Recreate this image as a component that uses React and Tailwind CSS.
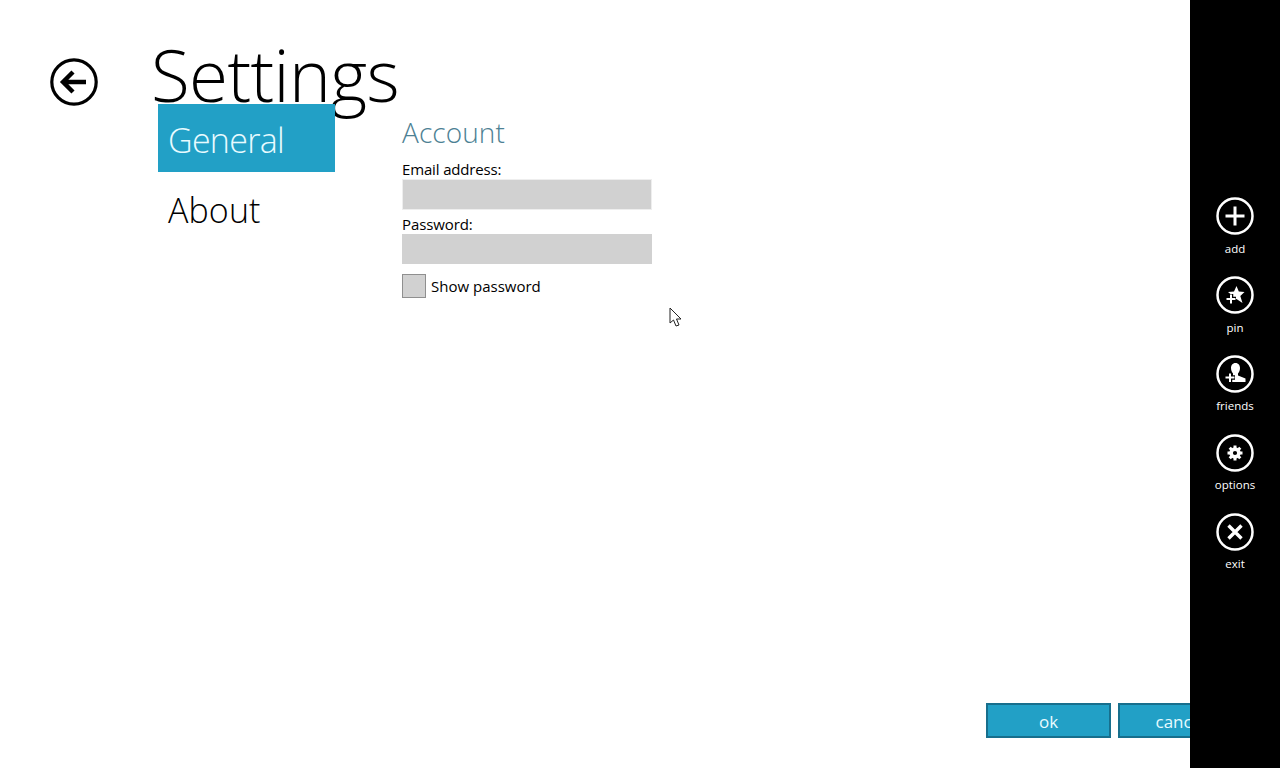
import React from "react";

const Circle = ({ children, sw = 2.5 }) => (
  <svg width="38" height="38" viewBox="0 0 38 38" fill="none" className="block">
    <circle cx="19" cy="19" r="17.5" stroke="white" strokeWidth={sw} />
    {children}
  </svg>
);

const actions = [
  {
    label: "add",
    gap: "mt-[4px]",
    icon: <path d="M19 9.5V28.5M9.5 19H28.5" stroke="white" strokeWidth="3" />,
  },
  {
    label: "pin",
    gap: "mt-[4px]",
    icon: (
      <>
        <path d="M20.5 10L22.8 15.6L28.5 16L24.3 20L26.5 27L20.5 23L15 25L17 20L12 16L18 15.6Z" fill="white" />
        <path d="M15 18V28M10 23H20" stroke="black" strokeWidth="4.5" />
        <path d="M15 18.5V27.5M10.5 23H19.5" stroke="white" strokeWidth="2" />
      </>
    ),
  },
  {
    label: "friends",
    gap: "mt-[3px]",
    icon: (
      <>
        <path d="M19.5 8C22.5 8 24 10.5 24 13C24 15.5 23 17.5 22 18.5V20.5L29.5 23.5V27H13V23.5L17 20.5V18.5C16 17.5 15 15.5 15 13C15 10.5 16.5 8 19.5 8Z" fill="white" />
        <path d="M14 18V27.5M9 22.5H19" stroke="black" strokeWidth="4.5" />
        <path d="M14 18.5V27M9.5 22.5H18.5" stroke="white" strokeWidth="2" />
      </>
    ),
  },
  {
    label: "options",
    gap: "mt-[3px]",
    icon: (
      <>
        <circle cx="19" cy="19" r="3.9" stroke="white" strokeWidth="3.6" />
        <path d="M19 11.5V14.5M19 23.5V26.5M11.5 19H14.5M23.5 19H26.5M13.7 13.7L15.8 15.8M22.2 22.2L24.3 24.3M24.3 13.7L22.2 15.8M15.8 22.2L13.7 24.3" stroke="white" strokeWidth="3" />
      </>
    ),
  },
  {
    label: "exit",
    gap: "mt-[3px]",
    icon: <path d="M12.5 12.5L25.5 25.5M25.5 12.5L12.5 25.5" stroke="white" strokeWidth="3.4" />,
  },
];

export default function App() {
  return (
    <div className="relative flex h-[768px] w-[1280px] overflow-hidden bg-white font-['Open_Sans','Noto_Sans',sans-serif] text-black">
      <main className="relative flex w-[1190px] shrink-0 flex-col overflow-hidden">
        <header className="flex h-[104px] shrink-0 items-start pl-[50px]">
          <svg width="48" height="48" viewBox="0 0 48 48" fill="none" className="mt-[58px] shrink-0">
            <circle cx="24" cy="24" r="22.2" stroke="black" strokeWidth="3.2" />
            <path d="M36 24H13M23 14L13 24L23 34" stroke="black" strokeWidth="4.4" />
          </svg>
          <h1 className="ml-[53px] mt-[29px] text-[71px] leading-[92px] font-light whitespace-nowrap tracking-[-0.65px]">
            Settings
          </h1>
        </header>

        <div className="relative flex flex-1 pl-[158px]">
          <nav className="w-[177px] shrink-0">
            <div className="flex h-[68px] items-center bg-[#22a0c6] pl-[10px] pt-[4px] text-[34px] font-light tracking-[-0.7px] text-[#e8fbff]">
              General
            </div>
            <div className="mt-[2px] flex h-[68px] items-center pl-[10px] pt-[4px] text-[34px] font-light tracking-[0.1px]">
              About
            </div>
          </nav>

          <section className="ml-[67px] w-[250px]">
            <h2 className="mt-[9px] h-[38px] text-[28px] leading-[38px] font-light tracking-[0.1px] text-[#4d8194]">Account</h2>
            <label className="mt-[9px] block h-[19px] text-[15px] leading-[19px] tracking-[-0.15px]">Email address:</label>
            <div className="h-[31px] border border-[#eeeeee] bg-[#d1d1d1]" />
            <label className="mt-[5px] block h-[19px] text-[15px] leading-[19px] tracking-[-0.1px]">Password:</label>
            <div className="h-[30px] bg-[#d1d1d1]" />
            <div className="mt-[10px] flex items-center">
              <div className="h-[24px] w-[24px] border border-[#8f8f8f] bg-[#d1d1d1]" />
              <span className="ml-[5px] text-[15px]">Show password</span>
            </div>
          </section>
        </div>

        <footer className="flex h-[65px] shrink-0 gap-[7px] pl-[986px]">
          <button className="h-[35px] w-[125px] shrink-0 border-2 border-[#176f8d] bg-[#22a0c6] pt-[2px] text-[17px] text-[#e8fbff]">
            ok
          </button>
          <button className="h-[35px] w-[125px] shrink-0 border-2 border-[#176f8d] bg-[#22a0c6] pt-[2px] text-[17px] text-[#e8fbff]">
            cancel
          </button>
        </footer>
      </main>

      <aside className="flex w-[90px] shrink-0 flex-col items-center bg-black pt-[197px] text-white">
        {actions.map((a) => (
          <div key={a.label} className="flex h-[79px] flex-col items-center">
            <Circle>{a.icon}</Circle>
            <span className={`${a.gap} text-[11.5px] leading-[20px]`}>{a.label}</span>
          </div>
        ))}
      </aside>

      <svg width="15" height="22" viewBox="0 0 15 22" className="pointer-events-none absolute left-[669px] top-[307px]">
        <path d="M1 1V16L4.5 13L7 19L10 18L7.5 12H12Z" fill="white" stroke="#222" strokeWidth="1" />
      </svg>
    </div>
  );
}
